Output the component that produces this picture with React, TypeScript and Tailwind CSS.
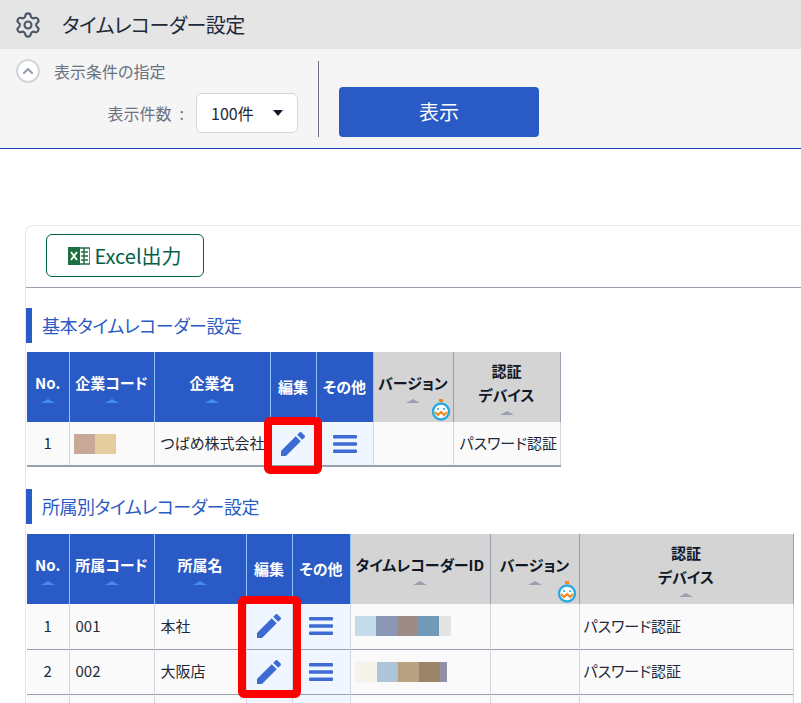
import React from "react";
import { ChevronUp, Settings } from "lucide-react";

const blue = "bg-[#2a5ac5]";

function SortMark({ gray }: { gray?: boolean }) {
  return (
    <div
      className={`mx-auto mt-1 h-0 w-0 border-x-7 border-b-4 border-x-transparent ${
        gray ? "border-b-gray-400" : "border-b-blue-400/70"
      }`}
    />
  );
}

function TimerBadge() {
  return (
    <svg viewBox="0 0 20 22" className="absolute bottom-0 right-0.5 h-6 w-5">
      <rect x="8" y="0" width="4" height="3" fill="#f08a24" />
      <circle cx="10" cy="12.5" r="8" fill="#fff" stroke="#29a9e0" strokeWidth="2.4" />
      <circle cx="7" cy="10" r="1.1" fill="#29a9e0" />
      <circle cx="13" cy="10" r="1.1" fill="#29a9e0" />
      <path d="M4 13 l3 3 l3 -3 l3 3 l3 -3" fill="none" stroke="#f08a24" strokeWidth="2" />
    </svg>
  );
}

function HeadCell({
  label,
  gray,
  timer,
  center,
}: {
  label: React.ReactNode;
  gray?: boolean;
  timer?: boolean;
  center?: boolean;
}) {
  return (
    <th
      className={`relative h-[70px] whitespace-nowrap border-r p-0 text-center text-[15px] font-bold leading-6 ${
        gray
          ? "border-gray-400 bg-neutral-300 text-gray-900"
          : `border-blue-300 ${blue} text-white`
      }`}
    >
      {center ? (
        label
      ) : (
        <>
          {label}
          <SortMark gray={gray} />
        </>
      )}
      {timer && <TimerBadge />}
    </th>
  );
}

function EditCell() {
  return (
    <td className="border-r border-gray-300 bg-blue-50 p-0 text-center">
      <svg viewBox="0 0 24 24" className="mx-auto h-8 w-8 text-[#3d6bd1]" fill="currentColor">
        <path d="M3 17.25V21h3.75L17.81 9.94l-3.75-3.75L3 17.25zM20.71 7.04c.39-.39.39-1.02 0-1.41l-2.34-2.34c-.39-.39-1.02-.39-1.41 0l-1.83 1.83 3.75 3.75 1.83-1.83z" />
      </svg>
    </td>
  );
}

function OtherCell() {
  return (
    <td className="border-r border-gray-300 bg-blue-50 p-0 text-center">
      <svg viewBox="0 0 24 18" className="mx-auto h-4.5 w-6 text-[#3d6bd1]" fill="currentColor">
        <rect x="0" y="0" width="24" height="3.4" rx="1" />
        <rect x="0" y="7.3" width="24" height="3.4" rx="1" />
        <rect x="0" y="14.6" width="24" height="3.4" rx="1" />
      </svg>
    </td>
  );
}

function Blur({ parts }: { parts: [string, number][] }) {
  return (
    <div className="flex h-5 pl-1">
      {parts.map(([c, w], i) => (
        <div key={i} className="shrink-0" style={{ backgroundColor: c, width: w }} />
      ))}
    </div>
  );
}

function SectionTitle({ children }: { children: React.ReactNode }) {
  return (
    <h2 className="border-l-6 border-[#2a5ac5] pl-2.5 text-lg leading-8.75 tracking-tight text-[#2a5ac5]">
      {children}
    </h2>
  );
}

const rows: { no: number; code: string; name: string; parts: [string, number][] }[] = [
  {
    no: 1,
    code: "001",
    name: "本社",
    parts: [
      ["#c5dcea", 21],
      ["#8a97b5", 21],
      ["#9b8a85", 21],
      ["#7299b8", 21],
      ["#e4e5e2", 12],
    ],
  },
  {
    no: 2,
    code: "002",
    name: "大阪店",
    parts: [
      ["#f6f3ec", 22],
      ["#adc4d9", 21],
      ["#b8a181", 21],
      ["#9b8468", 21],
      ["#8f8fa6", 7],
    ],
  },
];

export default function App() {
  return (
    <div
      className="h-screen overflow-hidden bg-white text-gray-800 [font-feature-settings:'palt']"
      style={{ fontFamily: '"Noto Sans CJK JP", "Noto Sans", sans-serif' }}
    >
      <header className="flex h-12.25 items-center gap-5 bg-neutral-200 pl-3.5">
        <Settings className="h-7 w-7 text-gray-600" strokeWidth={1.8} />
        <h1 className="text-xl tracking-tight text-gray-800">タイムレコーダー設定</h1>
      </header>

      <div className="flex h-[100px] border-b border-blue-800 bg-neutral-100 pl-4">
        <div className="w-70.5 pt-2.5">
          <div className="flex items-center gap-3.5">
            <div className="flex h-6 w-6 items-center justify-center rounded-full border-2 border-gray-300 bg-white">
              <ChevronUp className="h-4 w-4 text-gray-400" strokeWidth={3.5} />
            </div>
            <span className="text-base text-gray-500">表示条件の指定</span>
          </div>
          <div className="mt-2.5 flex items-center justify-end gap-3">
            <span className="text-base text-gray-500">
              表示件数<span className="ml-2">:</span>
            </span>
            <div className="flex h-10 w-25.5 items-center justify-between rounded-md border border-gray-300 bg-white px-3.5 text-base">
              100件
              <div className="h-0 w-0 border-x-5 border-t-6 border-x-transparent border-t-gray-900" />
            </div>
          </div>
        </div>
        <div className="mx-5 mt-3 h-19 border-l border-gray-500" />
        <button className={`mt-9.5 h-12.5 w-50 rounded ${blue} text-xl text-white`}>表示</button>
      </div>

      <div className="ml-6.25 mt-19 rounded-tl-lg border-l border-t border-gray-200">
        <div className="border-b border-gray-400 pb-2.5 pl-5 pt-2">
          <button className="flex h-10.75 w-39.5 items-center justify-center gap-1 rounded-md border border-emerald-800 text-xl text-emerald-800">
            <svg viewBox="0 0 22 20" className="h-5 w-5.5">
              <rect x="9" y="2" width="13" height="16" rx="1" fill="#fff" stroke="#1d6f42" strokeWidth="1.5" />
              <path d="M13 6h7M13 10h7M13 14h7M16 2v16" stroke="#1d6f42" strokeWidth="1.5" />
              <rect x="0" y="1" width="12" height="18" fill="#1d6f42" />
              <path d="M3 6l6 8M9 6l-6 8" stroke="#fff" strokeWidth="1.8" />
            </svg>
            Excel出力
          </button>
        </div>

        <div className="mt-5">
          <SectionTitle>基本タイムレコーダー設定</SectionTitle>
        </div>

        <div className="relative ml-px mt-2.25 w-fit">
          <table className="w-133.25 table-fixed border-collapse border-b-2 border-gray-400 text-[15px]">
            <colgroup>
              <col className="w-10.5" />
              <col className="w-21.25" />
              <col className="w-29" />
              <col className="w-11.5" />
              <col className="w-14.25" />
              <col className="w-20" />
              <col className="w-26.75" />
            </colgroup>
            <thead>
              <tr>
                <HeadCell label="No." />
                <HeadCell label="企業コード" />
                <HeadCell label="企業名" />
                <HeadCell label="編集" center />
                <HeadCell label="その他" center />
                <HeadCell label="バージョン" gray timer />
                <HeadCell
                  label={
                    <>
                      認証
                      <br />
                      デバイス
                    </>
                  }
                  gray
                />
              </tr>
            </thead>
            <tbody>
              <tr className="h-11 bg-neutral-50">
                <td className="border-r border-gray-300 text-center">1</td>
                <td className="border-r border-gray-300">
                  <Blur
                    parts={[
                      ["#c8a897", 21],
                      ["#e5cda0", 21],
                    ]}
                  />
                </td>
                <td className="whitespace-nowrap border-r border-gray-300 pl-1.5">つばめ株式会社</td>
                <EditCell />
                <OtherCell />
                <td className="border-r border-gray-300" />
                <td className="whitespace-nowrap border-r border-gray-300 pl-1.5">パスワード認証</td>
              </tr>
            </tbody>
          </table>
          <div className="absolute left-59.25 top-16.25 h-14.25 w-14.5 rounded-md border-8 border-[#ff0000]" />
        </div>

        <div className="mt-5.5">
          <SectionTitle>所属別タイムレコーダー設定</SectionTitle>
        </div>

        <div className="relative ml-px mt-2.5 w-fit">
          <table className="w-191.5 table-fixed border-collapse text-[15px]">
            <colgroup>
              <col className="w-10.5" />
              <col className="w-21.25" />
              <col className="w-23" />
              <col className="w-11.5" />
              <col className="w-14.5" />
              <col className="w-35" />
              <col className="w-22.25" />
              <col className="w-53.5" />
            </colgroup>
            <thead>
              <tr>
                <HeadCell label="No." />
                <HeadCell label="所属コード" />
                <HeadCell label="所属名" />
                <HeadCell label="編集" center />
                <HeadCell label="その他" center />
                <HeadCell label="タイムレコーダーID" gray />
                <HeadCell label="バージョン" gray timer />
                <HeadCell
                  label={
                    <>
                      認証
                      <br />
                      デバイス
                    </>
                  }
                  gray
                />
              </tr>
            </thead>
            <tbody>
              {rows.map((r) => (
                <tr key={r.no} className="h-11.25 border-b border-gray-400 bg-neutral-50">
                  <td className="border-r border-gray-300 text-center">{r.no}</td>
                  <td className="border-r border-gray-300 pl-1.5">{r.code}</td>
                  <td className="border-r border-gray-300 pl-1.5">{r.name}</td>
                  <EditCell />
                  <OtherCell />
                  <td className="border-r border-gray-300">
                    <Blur parts={r.parts} />
                  </td>
                  <td className="border-r border-gray-300" />
                  <td className="border-r border-gray-300 pl-1">パスワード認証</td>
                </tr>
              ))}
              <tr className="h-11 bg-neutral-50">
                <td className="border-r border-gray-300" />
                <td className="border-r border-gray-300" />
                <td className="border-r border-gray-300" />
                <td className="border-r border-gray-300 bg-blue-50" />
                <td className="border-r border-gray-300 bg-blue-50" />
                <td className="border-r border-gray-300" />
                <td className="border-r border-gray-300" />
                <td className="border-r border-gray-300" />
              </tr>
            </tbody>
          </table>
          <div className="absolute left-52.75 top-15.5 h-25.5 w-15.75 rounded-md border-8 border-[#ff0000]" />
        </div>
      </div>
    </div>
  );
}
